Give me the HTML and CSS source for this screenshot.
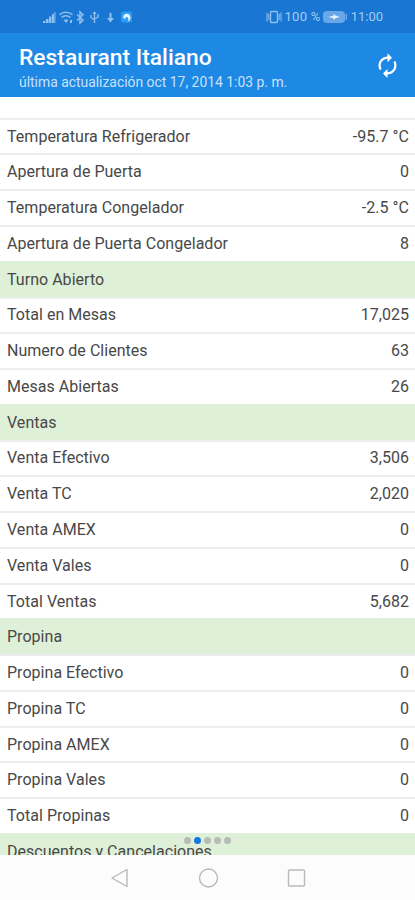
FILE: index.html
```html
<!DOCTYPE html>
<html lang="es">
<head>
<meta charset="utf-8">
<title>Restaurant Italiano</title>
<link rel="stylesheet" href="styles.css">
</head>
<body>
<div class="screen">
  <div class="status">
    <svg class="status-icons" width="92" height="16" viewBox="0 0 92 16">
      <g fill="#8fc0ef">
        <path d="M0 14v-2h2.500v2zM3 14v-4h2.500v4zM6 14V7.500h2.500V14zM9 14V5h2v9z"/><path d="M11 14V3h1.700v11z" opacity=".6"/>
        <path d="M23 14l-2.300-3a3.800 3.800 0 0 1 4.600 0z"/>
        <path d="M27 11h2v3h-2z"/>
      </g>
      <g fill="none" stroke="#8fc0ef" stroke-width="1.500">
        <path d="M16.500 5.800a9.400 9.400 0 0 1 13 0M18.500 8.600a6.300 6.300 0 0 1 9 0"/>
        <path d="M34 5.500l6 5.700-3 2.800V3l3 2.800-6 5.700"/>
        <path d="M51.500 3v11M48 6v2.500l3.500 2.500M55 5v3l-3.500 2" stroke-width="1.300"/>
        <path d="M67.500 4v7" stroke-width="2"/>
      </g>
      <path d="M49.500 5l2-3 2 3zM64 9h7l-3.500 4.500z" fill="#8fc0ef"/>
      <rect x="78" y="2.500" width="11" height="11" rx="2" fill="#2b9cf4"/>
      <path d="M80.500 6.500c2-3 7-2 7 2 0 2-1 3.500-3 4 1.500-2 1.200-4-.5-4.500-1.500-.5-2 1-1.500 2-2 0-2.800-1.500-2-3.500z" fill="#e8f6ff"/>
    </svg>
    <div class="status-right">
      <svg width="16" height="14" viewBox="0 0 16 14" fill="none" stroke="#8fc0ef" stroke-width="1.400"><rect x="4.500" y="1.500" width="7" height="11" rx="1"/><path d="M1 2.500v9M15 2.500v9M2.800 4v6M13.200 4v6" stroke-width="1"/></svg>
      <span class="percent">100 %</span>
      <svg class="battery" width="25" height="12" viewBox="0 0 25 12"><rect width="22" height="12" rx="4" fill="#69a8e8"/><path d="M22.500 3h1.500v6h-1.500z" fill="#69a8e8"/><path d="M5.500 6l5-1.200V3l2 1.600L17 6l-5 1.300V9l-2-1.800z" fill="#e5f2ff"/></svg>
      <span class="clock">11:00</span>
    </div>
  </div>
  <header class="bar">
    <div>
      <h1>Restaurant Italiano</h1>
      <p>última actualización oct 17, 2014 1:03 p. m.</p>
    </div>
    <svg class="refresh" width="27" height="27" viewBox="0 0 24 24" fill="#fff"><path d="M12 6v3l4-4-4-4v3c-4.420 0-8 3.580-8 8 0 1.570.46 3.030 1.240 4.260L6.700 14.800c-.45-.83-.7-1.790-.7-2.800 0-3.310 2.690-6 6-6zm6.760 1.740L17.300 9.200c.44.84.7 1.790.7 2.800 0 3.310-2.690 6-6 6v-3l-4 4 4 4v-3c4.420 0 8-3.580 8-8 0-1.570-.46-3.030-1.240-4.260z"/></svg>
  </header>
  <main class="list">
    <div class="spacer"></div>
    <div class="row"><span>Temperatura Refrigerador</span><b>-95.7 °C</b></div>
    <div class="row"><span>Apertura de Puerta</span><b>0</b></div>
    <div class="row"><span>Temperatura Congelador</span><b>-2.5 °C</b></div>
    <div class="row"><span>Apertura de Puerta Congelador</span><b>8</b></div>
    <div class="row section"><span>Turno Abierto</span></div>
    <div class="row"><span>Total en Mesas</span><b>17,025</b></div>
    <div class="row"><span>Numero de Clientes</span><b>63</b></div>
    <div class="row"><span>Mesas Abiertas</span><b>26</b></div>
    <div class="row section"><span>Ventas</span></div>
    <div class="row"><span>Venta Efectivo</span><b>3,506</b></div>
    <div class="row"><span>Venta TC</span><b>2,020</b></div>
    <div class="row"><span>Venta AMEX</span><b>0</b></div>
    <div class="row"><span>Venta Vales</span><b>0</b></div>
    <div class="row"><span>Total Ventas</span><b>5,682</b></div>
    <div class="row section"><span>Propina</span></div>
    <div class="row"><span>Propina Efectivo</span><b>0</b></div>
    <div class="row"><span>Propina TC</span><b>0</b></div>
    <div class="row"><span>Propina AMEX</span><b>0</b></div>
    <div class="row"><span>Propina Vales</span><b>0</b></div>
    <div class="row"><span>Total Propinas</span><b>0</b></div>
    <div class="row section"><span>Descuentos y Cancelaciones</span></div>
    <div class="dots"><i></i><i class="on"></i><i></i><i></i><i></i></div>
  </main>
  <nav class="nav">
    <svg width="200" height="24" viewBox="0 0 200 24" fill="none" stroke="#b9b9b9" stroke-width="1.400" stroke-linejoin="round"><path d="M4 12l15-8.500v17z"/><circle cx="100.500" cy="12" r="9"/><rect x="180.500" y="4" width="16" height="16" rx="1"/></svg>
  </nav>
</div>
</body>
</html>
```
FILE: styles.css
```css
* { box-sizing: border-box; }
body { margin: 0; font-family: Roboto, "Liberation Sans", sans-serif; color: #484848; background: #fff; }
.screen { width: 415px; height: 900px; display: flex; flex-direction: column; overflow: hidden; }
.status { height: 33px; flex: none; background: #1976d2; display: flex; justify-content: space-between; align-items: center; padding: 0 32px 0 43px; color: #a3ccf3; }
.status-right { display: flex; align-items: center; font-size: 13px; }
.percent { margin-left: 2px; letter-spacing: .3px; }
.battery { margin: 0 3px 0 2px; }
.bar { height: 64px; flex: none; background: #1e88e5; display: flex; justify-content: space-between; align-items: flex-start; padding: 0 14px 0 19px; color: #fff; }
h1 { margin: 11px 0 0; font-size: 22.800px; line-height: 28px; font-weight: 500; white-space: nowrap; }
p { margin: 2px 0 0; font-size: 13.900px; line-height: 16px; color: #c9e2fa; white-space: nowrap; }
.refresh { margin-top: 19px; }
.list { flex: 1; min-height: 0; overflow: hidden; position: relative; }
.spacer { height: 20.700px; }
.row { height: 35.780px; border-top: 2px solid #ededed; padding: 0 6px 1px 7px; display: flex; justify-content: space-between; align-items: center; font-size: 16px; letter-spacing: .03px; white-space: nowrap; }
.row b { font-weight: 400; }
.section { background: #dff0d8; border-top-color: #dff0d8; }
.dots { position: absolute; left: 184px; bottom: 11px; display: flex; gap: 3px; }
.dots i { width: 7px; height: 7px; border-radius: 50%; background: #b7bdb5; }
.dots .on { background: #1479df; }
.nav { height: 45px; flex: none; background: #fcfcfc; display: flex; justify-content: center; align-items: center; }
```
